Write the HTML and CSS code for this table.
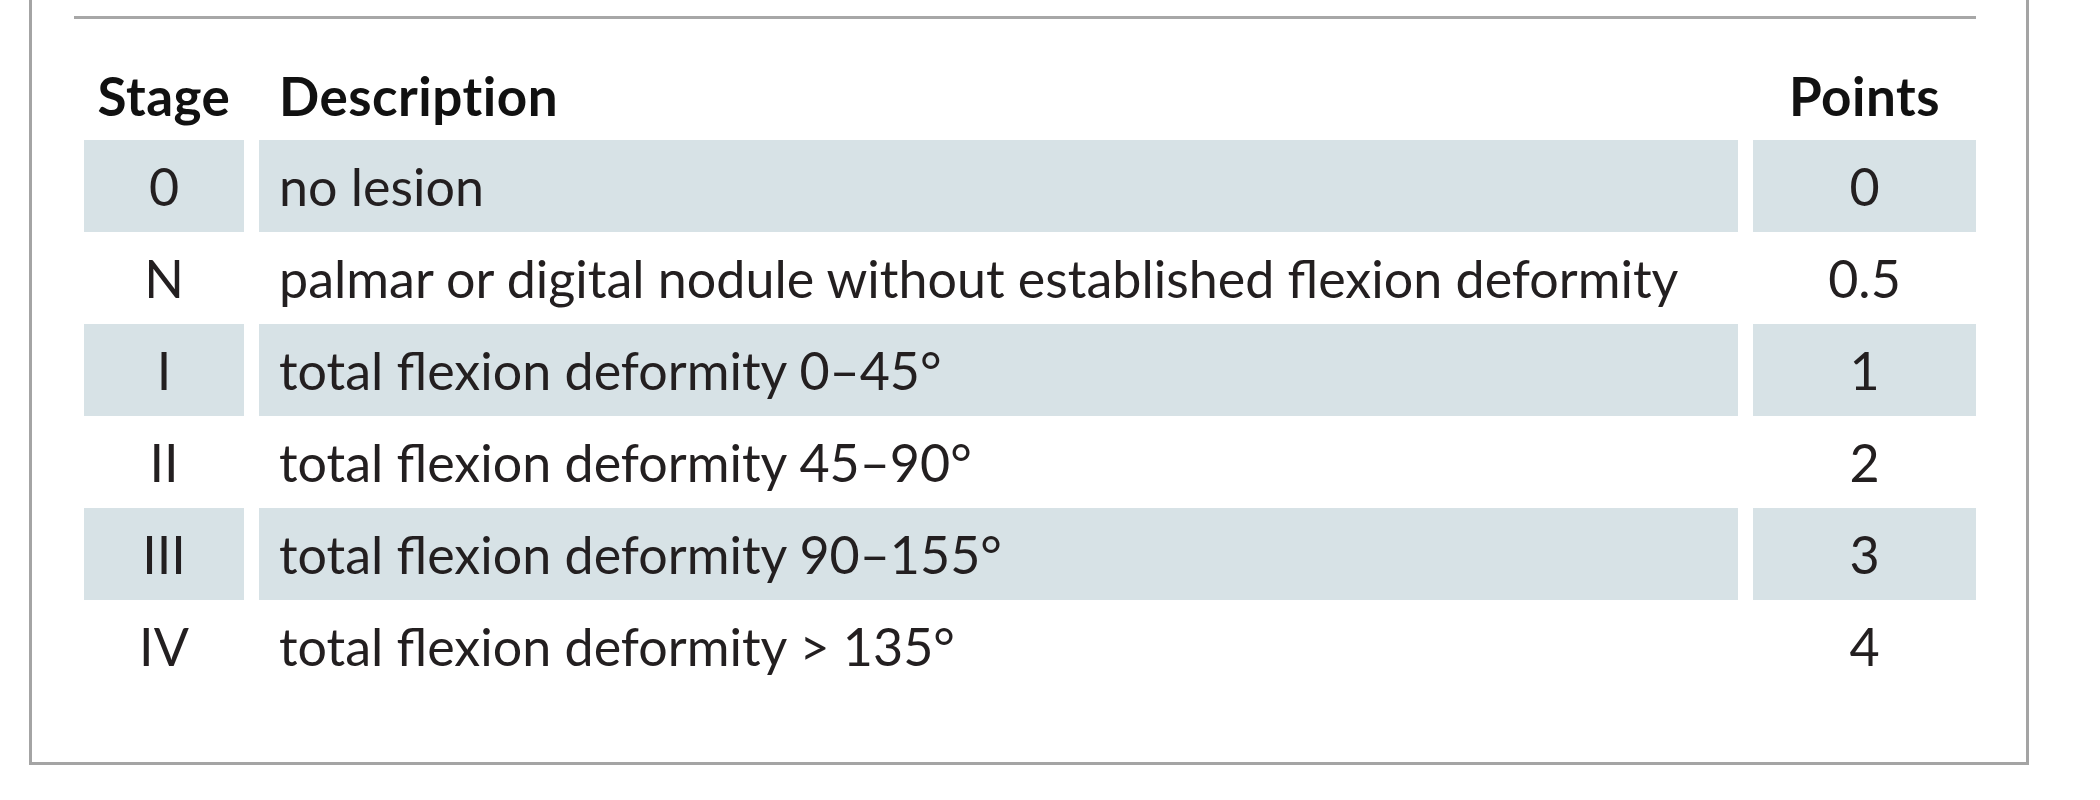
FILE: index.html
```html
<!DOCTYPE html>
<html lang="en">
<head>
<meta charset="utf-8">
<title>Dupuytren staging</title>
<link rel="stylesheet" href="styles.css">
</head>
<body>
<div class="frame">
  <div class="rule"></div>
  <div class="table">
    <div class="th stage">Stage</div>
    <div class="th desc">Description</div>
    <div class="th pts">Points</div>

    <div class="td stage shade">0</div>
    <div class="td desc shade">no lesion</div>
    <div class="td pts shade">0</div>

    <div class="td stage">N</div>
    <div class="td desc">palmar or digital nodule without established flexion deformity</div>
    <div class="td pts">0.5</div>

    <div class="td stage shade">I</div>
    <div class="td desc shade">total flexion deformity 0–45°</div>
    <div class="td pts shade">1</div>

    <div class="td stage">II</div>
    <div class="td desc">total flexion deformity 45–90°</div>
    <div class="td pts">2</div>

    <div class="td stage shade">III</div>
    <div class="td desc shade">total flexion deformity 90–155°</div>
    <div class="td pts shade">3</div>

    <div class="td stage">IV</div>
    <div class="td desc">total flexion deformity &gt; 135°</div>
    <div class="td pts">4</div>
  </div>
</div>
</body>
</html>
```
FILE: styles.css
```css
html, body {
  margin: 0;
  padding: 0;
  background: #ffffff;
}

body {
  font-family: "Lato", "Open Sans", sans-serif;
  color: #231f20;
}

.frame {
  margin-left: 29px;
  width: 1952px;
  border: 3px solid #a4a4a4;
  border-top: none;
  padding: 16px 0 70px 42px;
  box-sizing: content-box;
}

.rule {
  width: 1902px;
  height: 3px;
  background: #a7a7a7;
}

.table {
  margin-left: 10px;
  display: grid;
  grid-template-columns: 160px 1479px 223px;
  column-gap: 15px;
}

.th {
  font-weight: 700;
  font-size: 53px;
  line-height: 60px;
  padding-top: 47px;
  padding-bottom: 14px;
  color: #111111;
  letter-spacing: 0.5px;
}

.td {
  font-size: 52px;
  height: 90px;
  line-height: 90px;
  padding-top: 1px;
  padding-bottom: 1px;
  white-space: nowrap;
}

.stage, .pts {
  text-align: center;
}

.desc {
  padding-left: 20px;
}

.shade {
  background: #d7e2e6;
}
```
